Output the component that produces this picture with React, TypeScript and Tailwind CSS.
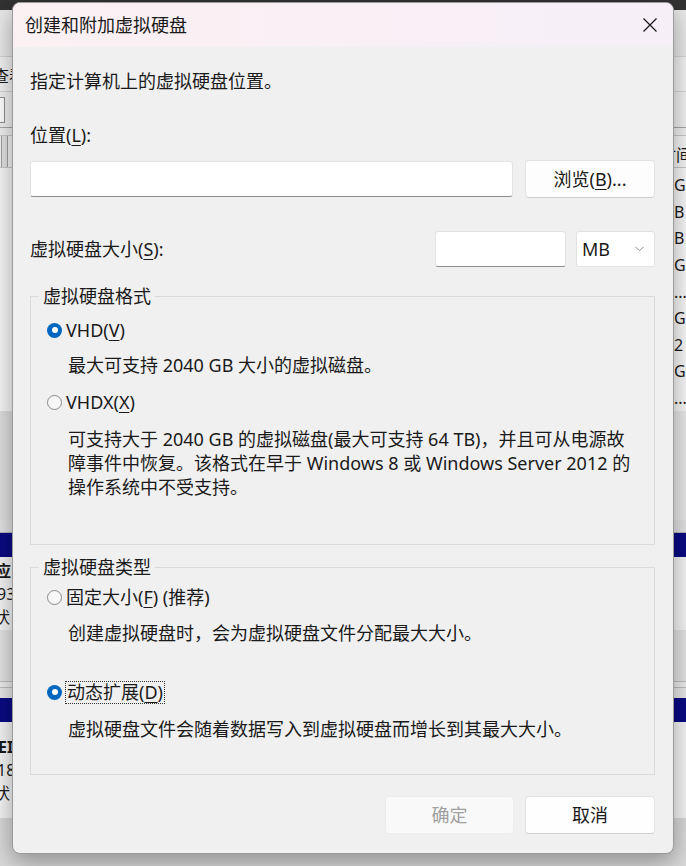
import React from "react";

const U = ({ children }: { children: React.ReactNode }) => (
  <span className="underline decoration-1 underline-offset-[3px]">{children}</span>
);

const Radio = ({ checked }: { checked: boolean }) =>
  checked ? (
    <span className="flex h-[15px] w-[15px] shrink-0 items-center justify-center rounded-full bg-[#0067c0]">
      <span className="h-[6px] w-[6px] rounded-full bg-white" />
    </span>
  ) : (
    <span className="h-[15px] w-[15px] shrink-0 rounded-full border border-[#8a8a8a] bg-[#f7f7f7]" />
  );

const Group = ({
  title,
  h,
  pt,
  children,
}: {
  title: string;
  h: string;
  pt: string;
  children: React.ReactNode;
}) => (
  <div className={`relative border border-[#dadada] ${h} ${pt} pl-[16px]`}>
    <span className="absolute -top-[13px] left-[8px] bg-[#f0f0f0] px-[4px] leading-[24px]">{title}</span>
    {children}
  </div>
);

const rightRows = ["GB", "B", "B", "GB", "...", "GB", "2", "GB", "..."];

export default function App() {
  return (
    <div className="relative h-[866px] w-[686px] overflow-hidden font-['Noto_Sans','Noto_Sans_CJK_SC',sans-serif] text-[#1a1a1a]">
      {/* background window (Disk Management) */}
      <div className="flex h-full w-full flex-col bg-[#ebebeb] text-[16px]">
        <div className="h-[10px] shrink-0 bg-[#323232]" />
        <div className="h-[47px] shrink-0 border-b border-[#d4d4d4] bg-[#e9e9e9]" />
        <div className="flex h-[35px] shrink-0 items-center border-b border-[#d4d4d4] bg-[#f2f2f2]">
          <span className="-ml-[7px] mt-[4px] leading-none">查看(V)</span>
        </div>
        <div className="flex h-[36px] shrink-0 items-center border-b border-[#a8a8a8] bg-[#f0f0f0]">
          <div className="h-[26px] w-[5px] border-y border-r border-[#8e8e8e] bg-white" />
        </div>
        <div className="h-[8px] shrink-0 border-b border-[#c8c8c8] bg-[#f0f0f0]" />
        <div className="flex h-[32px] shrink-0 items-center justify-between border-b border-[#c8c8c8] bg-[#f5f5f5]">
          <div className="flex h-full">
            <div className="h-full w-[2px] border-r border-[#a0a0a0]" />
            <div className="h-full w-[6px] border-r border-[#a0a0a0] bg-[#e2e2e2]" />
          </div>
          <span className="-mr-[6px] mt-[6px] leading-none">时间</span>
        </div>
        <div className="flex shrink-0 flex-col bg-[#f7f7f7] pt-[4px]">
          {rightRows.map((t, i) => (
            <div key={i} className="grid h-[26.6px] grid-cols-[674px_1fr] items-center">
              <span />
              <span className="whitespace-nowrap leading-none">{t}</span>
            </div>
          ))}
        </div>
        <div className="flex-1 bg-gradient-to-r from-[#dedede] via-[#ececec] to-[#e8e8e8]" />
      </div>
      {/* lower disk panel strips */}
      <div className="absolute left-0 right-0 top-[520px] flex flex-col text-[16px]">
        <div className="h-[13px] border-b border-[#b5b5b5] bg-[#e2e2e2]" />
        <div className="h-[24px] bg-[#0a0a84]" />
        <div className="flex h-[73px] flex-col justify-center gap-[3px] bg-[#f4f4f4] leading-[20px]">
          <span className="-ml-[5px] font-bold">应</span>
          <span className="-ml-[3px]">93</span>
          <span className="-ml-[6px]">状</span>
        </div>
        <div className="h-[52px] border-b border-[#bdbdbd] bg-[#e3e3e3]" />
        <div className="h-[6px] border-b border-[#bdbdbd] bg-[#ececec]" />
        <div className="h-[10px] bg-[#e8e8e8]" />
        <div className="h-[24px] bg-[#0a0a84]" />
        <div className="flex h-[96px] flex-col justify-center gap-[3px] bg-[#f4f4f4] leading-[20px]">
          <span className="-ml-[2px] font-bold">EI</span>
          <span className="-ml-[3px]">18</span>
          <span className="-ml-[6px]">状</span>
        </div>
        <div className="h-[60px] bg-[#d9d9d9]" />
      </div>

      {/* dialog */}
      <div className="absolute left-[12px] top-[2px] flex h-[852px] w-[662px] flex-col overflow-hidden rounded-[8px] border border-[#9a9a9a] bg-[#f0f0f0] text-[18px] shadow-[0_8px_24px_rgba(0,0,0,0.35)]">
        <div className="flex h-[44px] shrink-0 items-center justify-between bg-gradient-to-r from-[#fbf0f2] to-[#f6eff8] pl-[12px]">
          <span className="leading-[24px]">创建和附加虚拟硬盘</span>
          <div className="flex h-full w-[46px] items-center justify-center">
            <svg width="16" height="16" viewBox="0 0 16 16" fill="none" stroke="#1a1a1a" strokeWidth="1.3">
              <path d="M1.5 1.5 L14.5 14.5 M14.5 1.5 L1.5 14.5" />
            </svg>
          </div>
        </div>

        <div className="flex flex-col pl-[17px] pr-[18px]">
          <div className="mt-[22px] h-[24px] leading-[24px]">指定计算机上的虚拟硬盘位置。</div>
          <div className="mt-[30px] h-[24px] leading-[24px]">
            位置(<U>L</U>):
          </div>
          <div className="mt-[13px] flex h-[38px] items-center gap-[12px]">
            <div className="h-[36px] flex-1 rounded-[3px] border border-[#e3e3e3] border-b-[#8d8d8d] bg-white" />
            <div className="flex h-[38px] w-[130px] items-center justify-center rounded-[4px] border border-[#e2e2e2] border-b-[#cfcfcf] bg-[#fdfdfd] leading-[24px]">
              浏览(<U>B</U>)...
            </div>
          </div>
          <div className="mt-[32px] flex h-[37px] items-center justify-between">
            <span className="leading-[24px]">
              虚拟硬盘大小(<U>S</U>):
            </span>
            <div className="flex items-center gap-[10px]">
              <div className="h-[36px] w-[131px] rounded-[3px] border border-[#e3e3e3] border-b-[#8d8d8d] bg-white" />
              <div className="flex h-[36px] w-[79px] items-center justify-between rounded-[3px] border border-[#e2e2e2] bg-white pl-[5px] pr-[10px]">
                <span className="leading-[24px]">MB</span>
                <svg width="9" height="6" viewBox="0 0 9 6" fill="none" stroke="#8a8a8a" strokeWidth="1">
                  <path d="M0.5 0.8 L4.5 4.8 L8.5 0.8" />
                </svg>
              </div>
            </div>
          </div>

          <div className="mt-[29px]">
            <Group title="虚拟硬盘格式" h="h-[249px]" pt="pt-[21px]">
              <div className="flex h-[24px] items-center gap-[4px]">
                <Radio checked />
                <span className="leading-[24px]">
                  VHD(<U>V</U>)
                </span>
              </div>
              <div className="mt-[11px] ml-[21px] h-[24px] leading-[24px]">最大可支持 2040 GB 大小的虚拟磁盘。</div>
              <div className="mt-[13px] flex h-[24px] items-center gap-[4px]">
                <Radio checked={false} />
                <span className="leading-[24px]">
                  VHDX(<U>X</U>)
                </span>
              </div>
              <div className="mt-[13px] ml-[21px] whitespace-nowrap leading-[24px]">
                可支持大于 2040 GB 的虚拟磁盘(最大可支持 64 TB)，并且可从电源故
                <br />
                障事件中恢复。该格式在早于 Windows 8 或 Windows Server 2012 的
                <br />
                操作系统中不受支持。
              </div>
            </Group>
          </div>

          <div className="mt-[22px]">
            <Group title="虚拟硬盘类型" h="h-[208px]" pt="pt-[17px]">
              <div className="flex h-[24px] items-center gap-[4px]">
                <Radio checked={false} />
                <span className="leading-[24px]">
                  固定大小(<U>F</U>) (推荐)
                </span>
              </div>
              <div className="mt-[12px] ml-[21px] h-[24px] leading-[24px]">创建虚拟硬盘时，会为虚拟硬盘文件分配最大大小。</div>
              <div className="mt-[35px] flex h-[24px] items-center gap-[3px]">
                <Radio checked />
                <span className="border border-dotted border-[#333] px-[1px] leading-[21px]">
                  动态扩展(<U>D</U>)
                </span>
              </div>
              <div className="mt-[13px] ml-[21px] h-[24px] leading-[24px]">虚拟硬盘文件会随着数据写入到虚拟硬盘而增长到其最大大小。</div>
            </Group>
          </div>

          <div className="mt-[21px] flex h-[38px] justify-end gap-[11px]">
            <div className="flex w-[129px] items-center justify-center rounded-[4px] border border-[#ececec] bg-[#f9f9f9] leading-[24px] text-[#a0a0a0]">
              确定
            </div>
            <div className="flex w-[130px] items-center justify-center rounded-[4px] border border-[#e2e2e2] border-b-[#cfcfcf] bg-[#fefefe] leading-[24px]">
              取消
            </div>
          </div>
        </div>
      </div>
    </div>
  );
}
